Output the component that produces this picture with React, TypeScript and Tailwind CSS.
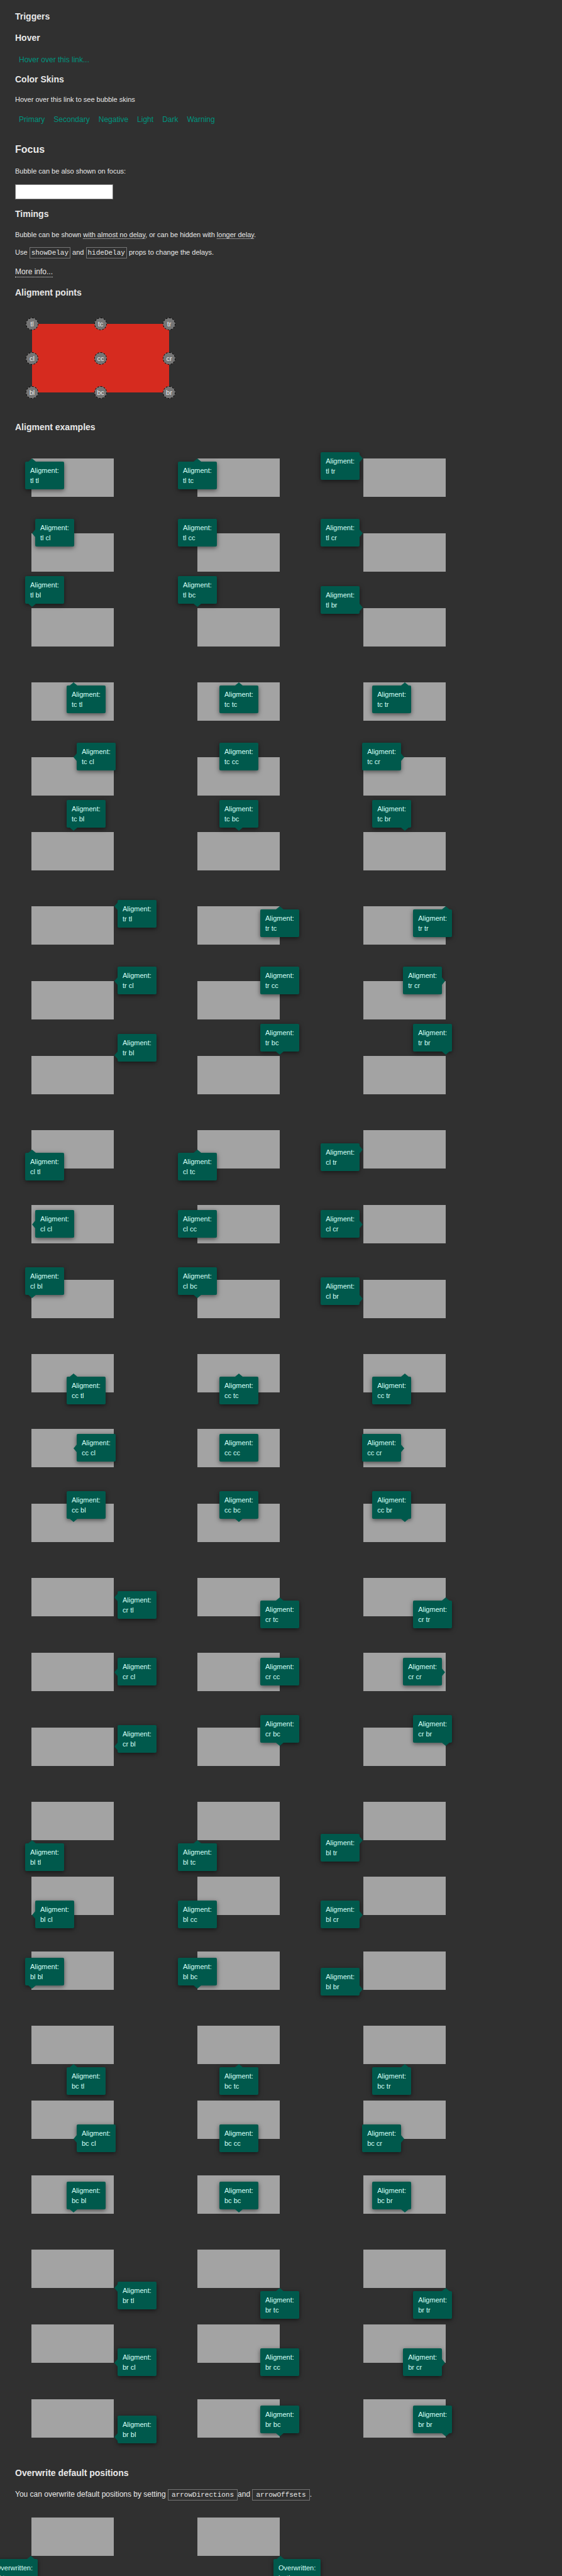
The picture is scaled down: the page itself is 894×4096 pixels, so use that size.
import React from "react";

type Point = "tl" | "tc" | "tr" | "cl" | "cc" | "cr" | "bl" | "bc" | "br";
type Side = "top" | "right" | "bottom" | "left" | "none";

const points: Point[] = ["tl", "tc", "tr", "cl", "cc", "cr", "bl", "bc", "br"];
const bubbleRows: Point[][] = [
  ["tl", "tc", "tr"],
  ["cl", "cc", "cr"],
  ["bl", "bc", "br"],
];
const skins = ["Primary", "Secondary", "Negative", "Light", "Dark", "Warning"];

// Where each alignment point lies on a target box.
const anchorClass: Record<Point, string> = {
  tl: "left-0 top-0",
  tc: "left-[66px] top-0",
  tr: "left-full top-0",
  cl: "left-0 top-[31px]",
  cc: "left-[66px] top-[31px]",
  cr: "left-full top-[31px]",
  bl: "left-0 top-full",
  bc: "left-[66px] top-full",
  br: "left-full top-full",
};

const markerClass: Record<Point, string> = {
  tl: "left-0 top-0",
  tc: "left-1/2 top-0",
  tr: "left-full top-0",
  cl: "left-0 top-1/2",
  cc: "left-1/2 top-1/2",
  cr: "left-full top-1/2",
  bl: "left-0 top-full",
  bc: "left-1/2 top-full",
  br: "left-full top-full",
};

const arrowSide: Record<Side, string> = {
  top: "bottom-full border-x-[6px] border-b-[5px] border-x-transparent border-b-[#00594c]",
  bottom: "top-full border-x-[6px] border-t-[5px] border-x-transparent border-t-[#00594c]",
  left: "right-full border-y-[6px] border-r-[5px] border-y-transparent border-r-[#00594c]",
  right: "left-full border-y-[6px] border-l-[5px] border-y-transparent border-l-[#00594c]",
  none: "hidden",
};

interface Placement {
  side: Side;
  box: string;
  arrow: string;
}

function placementFor(target: Point, bubble: Point): Placement {
  const column = target[1];
  switch (bubble) {
    case "tl":
      return column === "r"
        ? { side: "left", box: "left-1.5 -top-2.5", arrow: "top-1" }
        : { side: "top", box: "-left-2.5 top-[5px]", arrow: "left-[5px]" };
    case "tc":
      return { side: "top", box: "-left-[31px] top-[5px]", arrow: "left-[25px]" };
    case "tr":
      return column === "l"
        ? { side: "right", box: "right-1.5 -top-2.5", arrow: "top-1" }
        : { side: "top", box: "-right-2.5 top-[5px]", arrow: "right-1" };
    case "cl":
      return { side: "left", box: "left-1.5 -top-[23px]", arrow: "top-[17px]" };
    case "cc":
      return { side: "none", box: "-left-[31px] -top-[23px]", arrow: "" };
    case "cr":
      return { side: "right", box: "right-1.5 -top-[23px]", arrow: "top-[17px]" };
    case "bl":
      return column === "r"
        ? { side: "left", box: "left-1.5 -bottom-[9px]", arrow: "bottom-1" }
        : { side: "bottom", box: "-left-2.5 bottom-[7px]", arrow: "left-[5px]" };
    case "bc":
      return { side: "bottom", box: "-left-[31px] bottom-[7px]", arrow: "left-[25px]" };
    case "br":
      return column === "l"
        ? { side: "right", box: "right-1.5 -bottom-[9px]", arrow: "bottom-1" }
        : { side: "bottom", box: "-right-2.5 bottom-[7px]", arrow: "right-1" };
  }
}

function Bubble({
  title,
  target,
  bubble,
  placement,
}: {
  title: string;
  target: Point;
  bubble: Point;
  placement: Placement;
}) {
  return (
    <div className={`absolute size-0 ${anchorClass[target]}`}>
      <div
        className={`absolute z-10 h-11 w-max rounded-[2px] bg-[#00594c] px-2 py-1.5 text-[11px] leading-4 text-[#d5fff7] shadow-[0_2px_7px_rgba(0,0,0,0.55)] ${placement.box}`}
      >
        {title}
        <br />
        {target} {bubble}
        <span className={`absolute size-0 ${arrowSide[placement.side]} ${placement.arrow}`} />
      </div>
    </div>
  );
}

function Target({ children }: { children: React.ReactNode }) {
  return <div className="relative h-[61px] w-[131px] bg-[#a3a3a3]">{children}</div>;
}

function Heading({ className, children }: { className: string; children: React.ReactNode }) {
  return <h3 className={`text-sm leading-5 font-bold ${className}`}>{children}</h3>;
}

function Code({ className, children }: { className: string; children: React.ReactNode }) {
  return (
    <code
      className={`border border-[#757575] py-0.5 font-['Liberation_Mono',monospace] text-[11px] leading-none ${className}`}
    >
      {children}
    </code>
  );
}

function SkinLink({ children }: { children: React.ReactNode }) {
  return (
    <a href="#" className="px-1.5 text-xs leading-4 text-[#00947e]">
      {children}
    </a>
  );
}

function Dotted({ children }: { children: React.ReactNode }) {
  return <span className="border-b border-dotted border-[#e8e8e8]">{children}</span>;
}

export default function App() {
  return (
    <main className="h-screen overflow-hidden bg-[#303030] px-6 pt-4 font-['Liberation_Sans',Arial,sans-serif] text-[11px] leading-4 text-[#e8e8e8]">
      <Heading className="">Triggers</Heading>
      <Heading className="mt-3.5">Hover</Heading>
      <div className="mt-[17px] flex">
        <SkinLink>Hover over this link...</SkinLink>
      </div>
      <Heading className="mt-[13px]">Color Skins</Heading>
      <p className="mt-3.5">Hover over this link to see bubble skins</p>
      <nav className="mt-4 flex gap-0.5">
        {skins.map((skin) => (
          <SkinLink key={skin}>{skin}</SkinLink>
        ))}
      </nav>

      <h2 className="mt-[30px] text-base leading-5 font-bold">Focus</h2>
      <label htmlFor="focus-field" className="mt-4 block">
        Bubble can be also shown on focus:
      </label>
      <input
        id="focus-field"
        type="text"
        className="mt-[13px] block h-6 w-[156px] border border-[#757575] bg-white px-1 text-black"
      />

      <Heading className="mt-[13px]">Timings</Heading>
      <p className="mt-[15px]">
        Bubble can be shown <Dotted>with almost no delay</Dotted>, or can be hidden with{" "}
        <Dotted>longer delay</Dotted>.
      </p>
      <p className="mt-3">
        Use <Code className="px-0.5">showDelay</Code> and <Code className="px-0.5">hideDelay</Code>{" "}
        props to change the delays.
      </p>
      <div className="mt-[15px] flex text-xs leading-4">
        <a href="#" className="-mb-px border-b border-dotted border-[#e8e8e8] leading-4">
          More info...
        </a>
      </div>

      <Heading className="mt-[15px]">Aligment points</Heading>
      <div className="relative mt-10 ml-[27px] h-[109px] w-[218px] bg-[#d62b1f]">
        {points.map((point) => (
          <span
            key={point}
            className={`absolute flex size-5 -translate-x-1/2 -translate-y-1/2 items-center justify-center rounded-full border border-dashed border-black bg-[#757575] ${markerClass[point]}`}
          >
            {point}
          </span>
        ))}
      </div>

      <Heading className="mt-[45px]">Aligment examples</Heading>
      <div className="mt-10 ml-[26px] flex flex-col gap-[57px]">
        {points.map((target) => (
          <section key={target} className="flex flex-col gap-[58px]">
            {bubbleRows.map((row) => (
              <div key={row[0]} className="flex gap-[133px]">
                {row.map((bubble) => (
                  <Target key={bubble}>
                    <Bubble
                      title="Aligment:"
                      target={target}
                      bubble={bubble}
                      placement={placementFor(target, bubble)}
                    />
                  </Target>
                ))}
              </div>
            ))}
          </section>
        ))}
      </div>

      <Heading className="mt-[46px]">Overwrite default positions</Heading>
      <p className="mt-4 text-xs leading-4">
        You can overwrite default positions by setting{" "}
        <Code className="px-[5px]">arrowDirections</Code>and{" "}
        <Code className="px-[5px]">arrowOffsets</Code>.
      </p>
      <div className="mt-[29px] ml-[26px] flex gap-[133px]">
        <Target>
          <Bubble
            title="Overwritten:"
            target="bl"
            bubble="tr"
            placement={{ side: "top", box: "-right-2.5 top-[5px]", arrow: "right-[5px]" }}
          />
        </Target>
        <Target>
          <Bubble
            title="Overwritten:"
            target="br"
            bubble="tl"
            placement={{ side: "top", box: "-left-2.5 top-[5px]", arrow: "left-[5px]" }}
          />
        </Target>
      </div>
    </main>
  );
}
